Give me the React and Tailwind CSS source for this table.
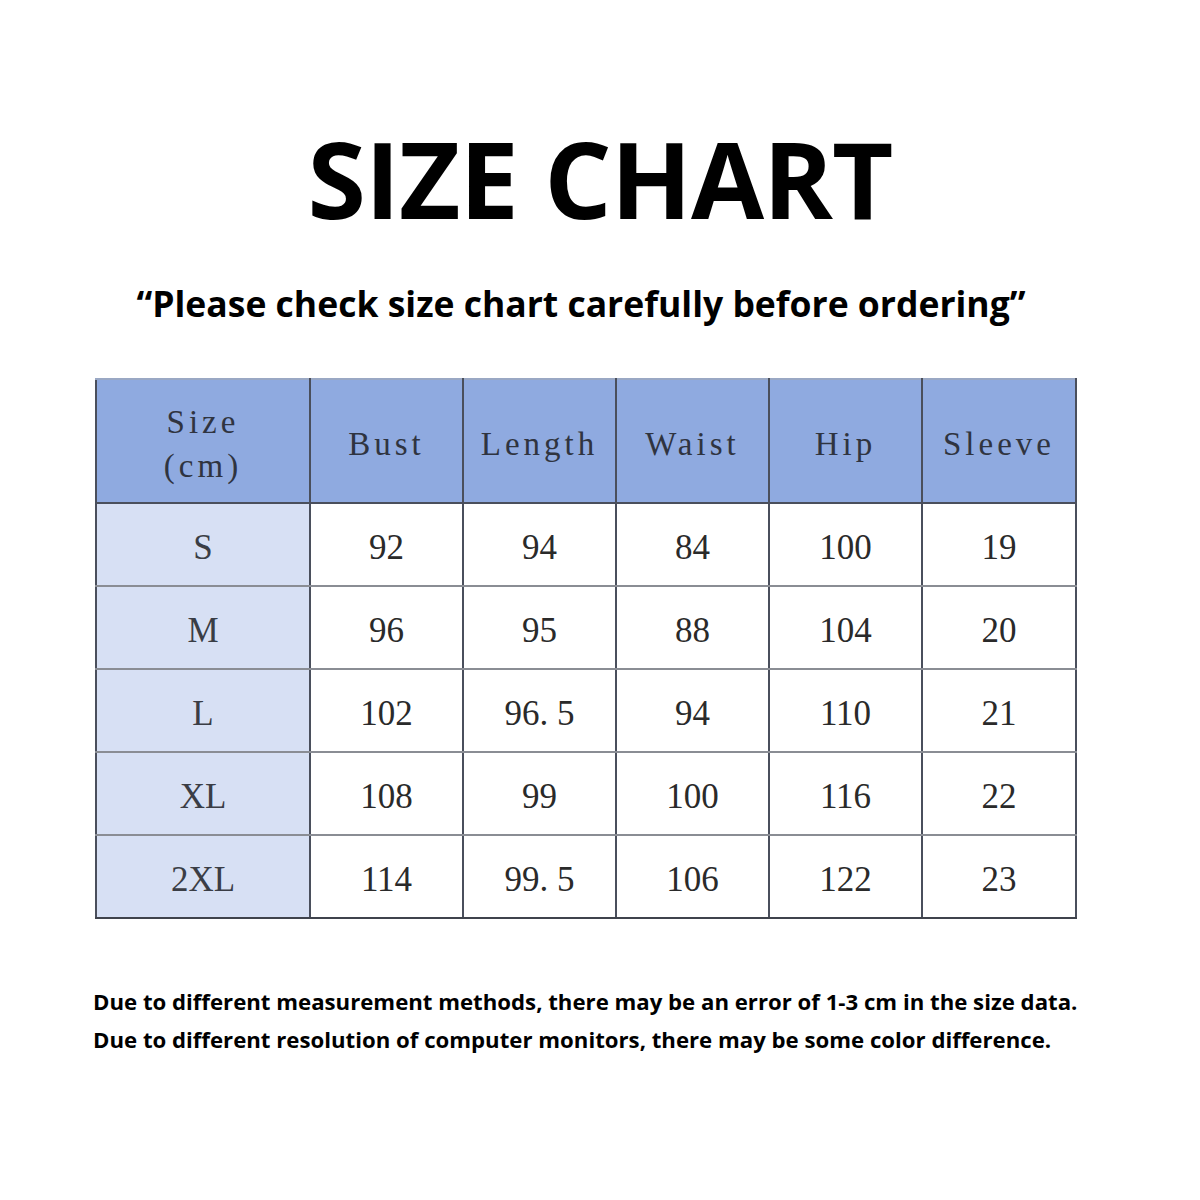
import React from 'react'

const headers = ['Bust', 'Length', 'Waist', 'Hip', 'Sleeve']

const rows = [
  ['S', '92', '94', '84', '100', '19'],
  ['M', '96', '95', '88', '104', '20'],
  ['L', '102', '96. 5', '94', '110', '21'],
  ['XL', '108', '99', '100', '116', '22'],
  ['2XL', '114', '99. 5', '106', '122', '23'],
]

const colW = ['w-[214px]', 'w-[153px]', 'w-[153px]', 'w-[153px]', 'w-[153px]', 'w-[154px]']

const serif = { fontFamily: '"Liberation Serif", "Noto Sans CJK SC", serif' }

export default function App() {
  return (
    <div className="w-[1200px] h-[1200px] bg-white flex flex-col" style={{ fontFamily: '"Open Sans", sans-serif' }}>
      <h1 className="mt-[114px] text-center text-[106px] leading-[128px] font-bold text-black tracking-[-1px]">
        SIZE CHART
      </h1>
      <p className="mt-[37px] pr-[38px] text-center text-[35.5px] leading-[48px] font-bold text-black">
        “Please check size chart carefully before ordering”
      </p>

      <div className="mt-[51px] ml-[95px]">
        <table className="border-collapse text-[#333]" style={serif}>
          <thead>
            <tr className="h-[124px] bg-[#8faae0]">
              <th className={`${colW[0]} pt-[6px] border-2 border-[#4a4f5c] border-t-[#9aa8c4] font-normal text-[33px] leading-[44px] tracking-[4px] text-[#2f3440]`}>
                Size
                <br />
                (cm)
              </th>
              {headers.map((h) => (
                <th
                  key={h}
                  className="pt-[8px] border-2 border-[#4a4f5c] border-t-[#9aa8c4] font-normal text-[33px] tracking-[4px] text-[#2f3440]"
                >
                  {h}
                </th>
              ))}
            </tr>
          </thead>
          <tbody>
            {rows.map((r, i) => (
              <tr key={r[0]} className="h-[83px]">
                {r.map((c, j) => (
                  <td
                    key={j}
                    className={`${colW[j]} pt-[8px] border-2 border-x-[#4a4f5c] border-y-[#8a8d94] text-center text-[35px] ${
                      j === 0 ? 'bg-[#d7e0f4] text-[#3a3d45]' : 'bg-white text-[#2a2a2a]'
                    } ${i === rows.length - 1 ? 'border-b-[#3f434c]' : ''}`}
                  >
                    {c}
                  </td>
                ))}
              </tr>
            ))}
          </tbody>
        </table>
      </div>

      <div className="mt-[64px] ml-[93px] text-[22.2px] leading-[38px] font-bold text-black">
        <p>Due to different measurement methods, there may be an error of 1-3 cm in the size data.</p>
        <p>Due to different resolution of computer monitors, there may be some color difference.</p>
      </div>
    </div>
  )
}
